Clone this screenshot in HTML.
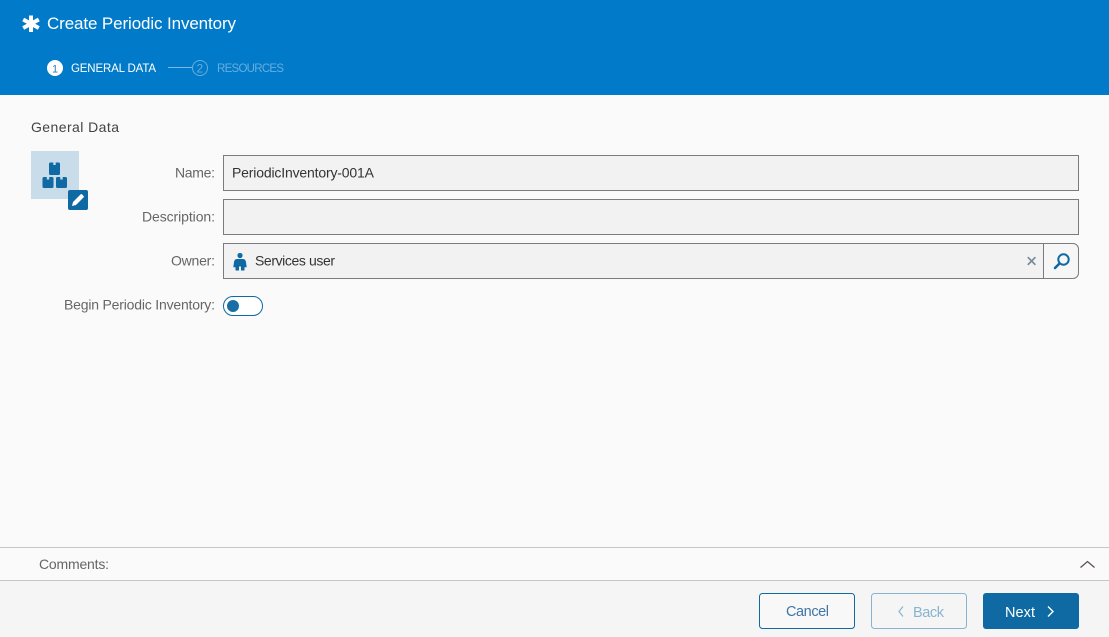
<!DOCTYPE html>
<html><head><meta charset="utf-8"><title>Create Periodic Inventory</title>
<style>
html,body{margin:0;padding:0;width:1109px;height:637px;overflow:hidden;background:#fafafa}
svg{display:block}
text{font-family:"Liberation Sans",sans-serif;font-size:14px;fill:#555}
</style></head><body>
<svg width="1109" height="637" viewBox="0 0 1109 637" xmlns="http://www.w3.org/2000/svg">
<rect width="1109" height="637" fill="#fafafa"/>
<rect width="1109" height="95" fill="#007ac9"/>
<!-- logo asterisk -->
<g stroke="#fff" stroke-width="4" stroke-linecap="butt">
<path d="M31 15.500V32M23.200 19.500L38.800 28M38.800 19.500L23.200 28"/>
</g>
<text x="47" y="29" textLength="189" style="font-size:17px;fill:#fff">Create Periodic Inventory</text>
<circle cx="55" cy="68" r="8" fill="#fff"/>
<text x="52" y="72.500" textLength="5.500" style="font-size:11px;fill:#2c7fb8">1</text>
<text x="71" y="72" textLength="85" style="font-size:11.500px;fill:#fff">GENERAL DATA</text>
<path d="M168 67.500H192" stroke="#7ab8e2" stroke-width="1"/>
<circle cx="200" cy="68" r="7.500" fill="none" stroke="#66aede" stroke-width="1"/>
<text x="196.500" y="72.500" textLength="7" style="font-size:12px;fill:#66aede">2</text>
<text x="217" y="72" textLength="67" style="font-size:11.500px;fill:#66aede">RESOURCES</text>

<text x="31" y="132" textLength="88" style="font-size:14px;fill:#444">General Data</text>

<rect x="31" y="151" width="48" height="48" fill="#c8dce9"/>
<g fill="#0f69a3">
<path d="M49 164a1.500 1.500 0 0 1 1.500-1.500h2.800v2.500h2.400v-2.500h2.800a1.500 1.500 0 0 1 1.500 1.500v9.500a1.500 1.500 0 0 1-1.500 1.500h-8a1.500 1.500 0 0 1-1.500-1.500z"/>
<path d="M42.500 178.500a1.500 1.500 0 0 1 1.500-1.500h2.800v2.500h2.400v-2.500h2.800a1.500 1.500 0 0 1 1.500 1.500v8a1.500 1.500 0 0 1-1.500 1.500h-8a1.500 1.500 0 0 1-1.500-1.500z"/>
<path d="M56 178.500a1.500 1.500 0 0 1 1.500-1.500h2.800v2.500h2.400v-2.500h2.800a1.500 1.500 0 0 1 1.500 1.500v8a1.500 1.500 0 0 1-1.500 1.500h-8a1.500 1.500 0 0 1-1.500-1.500z"/>
</g>
<rect x="68" y="190" width="20" height="20" rx="2" fill="#0f69a3"/>
<path d="M72 206l1-4 7.600-7.600a1 1 0 0 1 1.400 0l1.600 1.600a1 1 0 0 1 0 1.400L76 205z" fill="#fff"/>

<text x="175" y="177.500" textLength="40" style="fill:#666">Name:</text>
<text x="142" y="221.500" textLength="73" style="fill:#666">Description:</text>
<text x="171" y="265.500" textLength="44" style="fill:#666">Owner:</text>
<text x="64" y="309.500" textLength="151" style="fill:#666">Begin Periodic Inventory:</text>

<rect x="223.500" y="155.500" width="855" height="35" fill="#f2f2f2" stroke="#7b7b7b"/>
<text x="232" y="177.500" textLength="142" style="fill:#333">PeriodicInventory-001A</text>
<rect x="223.500" y="199.500" width="855" height="35" fill="#f2f2f2" stroke="#7b7b7b"/>
<path d="M223.500 243.500H1073a5.500 5.500 0 0 1 5.500 5.500v24a5.500 5.500 0 0 1-5.500 5.500H223.500z" fill="#f2f2f2"/>
<path d="M1043.500 244H1073a5 5 0 0 1 5 5v24a5 5 0 0 1-5 5h-29.500z" fill="#f6f6f6"/>
<path d="M223.500 243.500H1073a5.500 5.500 0 0 1 5.500 5.500v24a5.500 5.500 0 0 1-5.500 5.500H223.500z" fill="none" stroke="#7b7b7b"/>
<path d="M1043.500 244V278" stroke="#7b7b7b"/>
<g fill="#0f69a3">
<circle cx="240" cy="255.500" r="2.600"/>
<path d="M237.200 259h5.600c1.800 0 2.800 1 3.100 2.600l.8 5.600h-2.200v3.300h-3.500v-4h-2v4H235.500v-3.300h-2.200l.8-5.600c.3-1.600 1.300-2.600 3.100-2.600z"/>
</g>
<text x="255" y="265.500" textLength="80" style="fill:#333">Services user</text>
<path d="M1027.800 257.200l7.600 7.600M1035.400 257.200l-7.600 7.600" stroke="#75899a" stroke-width="1.700"/>
<circle cx="1063.500" cy="259.500" r="5.200" fill="none" stroke="#0f69a3" stroke-width="2"/>
<path d="M1059.500 263.500L1055 268" stroke="#0f69a3" stroke-width="2.600" stroke-linecap="round"/>

<rect x="223.500" y="296.500" width="39" height="19" rx="9.500" fill="#fff" stroke="#0f69a3"/>
<circle cx="233" cy="306" r="6" fill="#1a6ea6"/>

<rect y="548" width="1109" height="32" fill="#fafafa"/>
<path d="M0 547.500H1109" stroke="#c6c6c6"/>
<text x="39" y="569" textLength="70" style="fill:#666">Comments:</text>
<path d="M1080.500 567.500L1087.500 561.500L1094.500 567.500" fill="none" stroke="#5a4a4a" stroke-width="1.200"/>
<rect y="581" width="1109" height="56" fill="#f5f5f5"/>
<path d="M0 580.500H1109" stroke="#c6c6c6"/>

<rect x="759.500" y="593.500" width="95" height="35" rx="3" fill="#f8f8f8" stroke="#0f69a3"/>
<text x="786" y="616" textLength="43" style="fill:#3f76a6;font-size:14.500px">Cancel</text>
<rect x="871.500" y="593.500" width="95" height="35" rx="3" fill="#f5f5f5" stroke="#87b4d1"/>
<path d="M903 606.500L899 611.500L903 616.500" fill="none" stroke="#87b4d1" stroke-width="1.200"/>
<text x="913" y="617" textLength="31" style="fill:#87b4d1;font-size:14.500px">Back</text>
<rect x="983" y="593" width="96" height="36" rx="3" fill="#0f69a3"/>
<text x="1005" y="617" textLength="30" style="fill:#fff;font-size:14.500px">Next</text>
<path d="M1048 606.500L1053 611.500L1048 616.500" fill="none" stroke="#fff" stroke-width="1.400"/>
</svg>
</body></html>
